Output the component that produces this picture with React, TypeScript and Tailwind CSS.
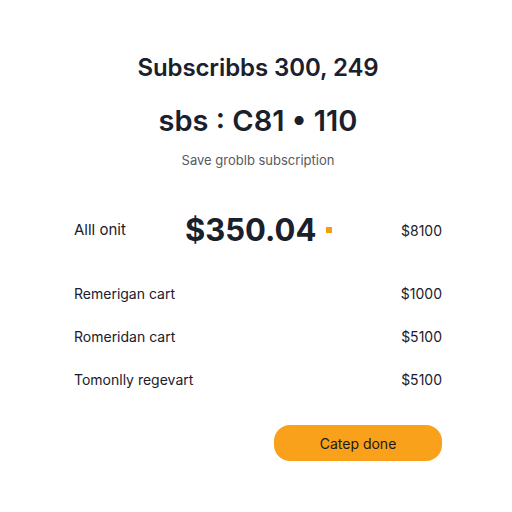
export default function App() {
  const rows = [
    { label: "Remerigan cart", value: "$1000" },
    { label: "Romeridan cart", value: "$5100" },
    { label: "Tomonlly regevart", value: "$5100" },
  ];
  return (
    <div className="w-[512px] h-[512px] bg-white" style={{ fontFamily: "Inter, 'Noto Sans', sans-serif" }}>
      <div className="w-[368px] ml-[74px] flex flex-col pt-[54px]">
        <div className="text-center text-[24px] leading-[28px] font-semibold text-[#1a202c] tracking-[-0.1px]">
          Subscribbs 300, 249
        </div>
        <div className="text-center text-[29px] leading-[36px] font-semibold text-[#1a202c] mt-[21px]">
          sbs : C81 • 110
        </div>
        <div className="text-center text-[13px] leading-[16px] text-[#555b63] mt-[13px]">
          Save groblb subscription
        </div>
        <div className="flex items-center mt-[42px] h-[40px]">
          <div className="text-[15px] text-[#1a202c] w-[111px]">Alll onit</div>
          <div className="text-[31px] font-bold text-[#1a202c] leading-[36px]">$350.04</div>
          <div className="w-[6px] h-[6px] bg-[#f59e0b] ml-[10px]"></div>
          <div className="flex-1 text-right text-[14px] text-[#1a202c]">$8100</div>
        </div>
        <div className="flex flex-col mt-[34px] gap-[25px]">
          {rows.map((r) => (
            <div key={r.label} className="flex items-center justify-between h-[18px] text-[14px] text-[#1a202c]">
              <span>{r.label}</span>
              <span>{r.value}</span>
            </div>
          ))}
        </div>
        <div className="flex justify-end mt-[37px]">
          <button className="w-[168px] h-[36px] rounded-[16px] bg-[#f9a11b] text-[14px] text-[#1a1a1a]">
            Catep done
          </button>
        </div>
      </div>
    </div>
  );
}
